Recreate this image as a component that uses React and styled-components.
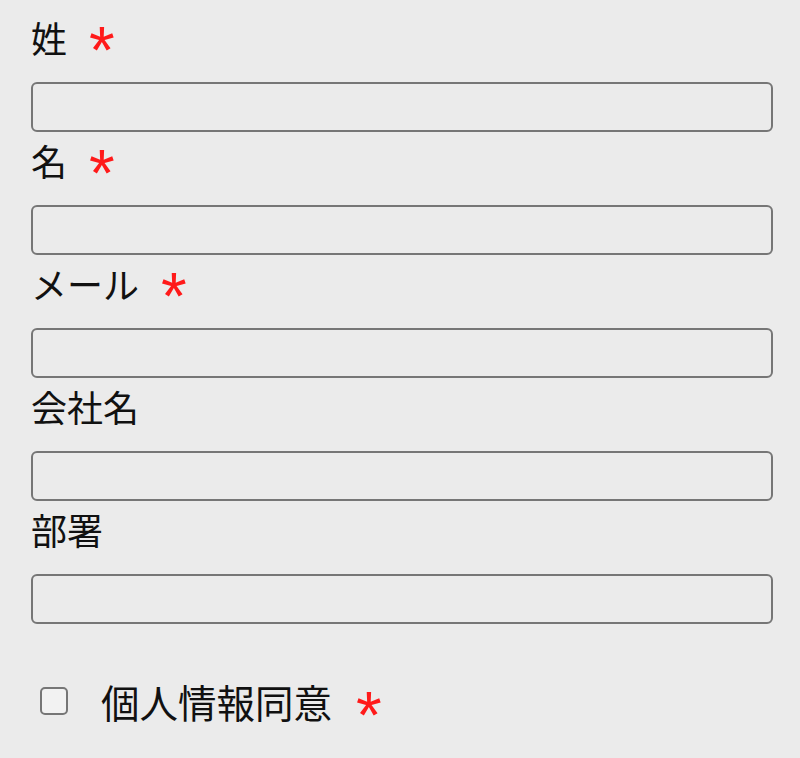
import styled, { createGlobalStyle } from "styled-components";

const GlobalStyle = createGlobalStyle`
    html, body {
        margin: 0;
        padding: 0;
        background: #ebebeb;
    }
    body {
        font-family: "Noto Sans CJK JP", "Noto Sans", sans-serif;
        color: #111;
    }
`;

const fields = [
    { label: "姓", required: true },
    { label: "名", required: true },
    { label: "メール", required: true, type: "email" },
    { label: "会社名" },
    { label: "部署" },
];

const Form = styled.form`
    display: flex;
    flex-direction: column;
    padding: 9px 27px 0 31px;
`;

const Field = styled.div`
    display: flex;
    flex-direction: column;
`;

const Label = styled.label`
    display: flex;
    align-items: center;
    height: 52px;
    padding-top: 2px;
    font-size: 36px;
    line-height: 52px;
    margin-bottom: 19px;
`;

const Required = styled.span`
    display: inline-block;
    color: #ff1a1a;
    font-family: "Liberation Sans", Arial, sans-serif;
    font-size: 66px;
    line-height: 52px;
    margin-left: ${(p) => p.$gap || 22}px;
    transform: translateY(${(p) => p.$shift || 13}px);
`;

const Input = styled.input`
    box-sizing: border-box;
    width: 100%;
    height: 50px;
    margin: 0;
    border: 2px solid #767676;
    border-radius: 6px;
    background: #ebebeb;
    font-size: 28px;
    padding: 0 12px;
    outline: none;
`;

const Consent = styled.label`
    display: flex;
    align-items: center;
    margin-top: 50px;
    font-size: 38.5px;
    line-height: 54px;
`;

const Checkbox = styled.input`
    appearance: none;
    box-sizing: border-box;
    width: 28px;
    height: 28px;
    margin: 0 33px 0 9px;
    border: 2px solid #767676;
    border-radius: 5px;
    background: #f2f2f2;

    &:checked {
        background: #0075ff;
        border-color: #0075ff;
    }
`;

const App = () => {
    return (
        <>
            <GlobalStyle />
            <Form onSubmit={(e) => e.preventDefault()}>
                {fields.map((f) => (
                    <Field key={f.label}>
                        <Label>
                            {f.label}
                            {f.required && <Required>*</Required>}
                        </Label>
                        <Input type={f.type || "text"} />
                    </Field>
                ))}
                <Consent>
                    <Checkbox type="checkbox" />
                    個人情報同意
                    <Required $gap={24} $shift={14}>*</Required>
                </Consent>
            </Form>
        </>
    );
};

export default App;
